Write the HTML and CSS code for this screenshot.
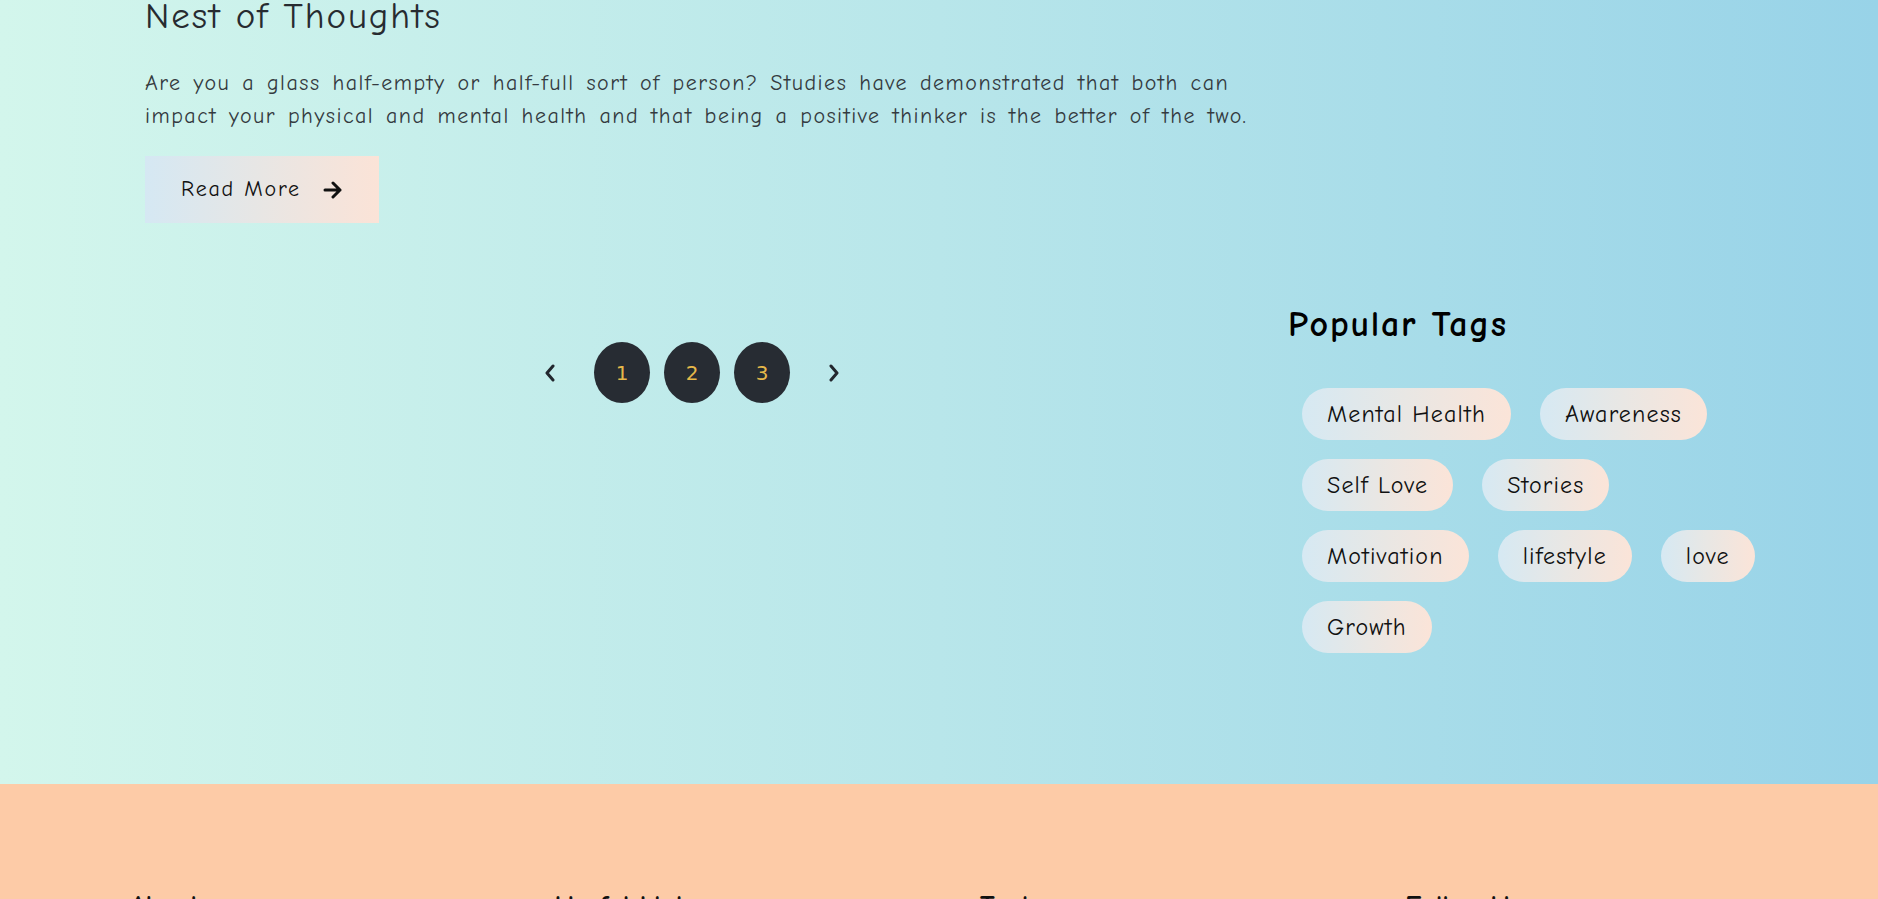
FILE: index.html
```html
<!DOCTYPE html>
<html lang="en">
<head>
<meta charset="utf-8">
<title>Nest of Thoughts</title>
<link rel="stylesheet" href="styles.css">
</head>
<body>
<main class="page">
  <div class="layout">
    <section class="posts">
      <article class="post">
        <h2 class="post-title">Nest of Thoughts</h2>
        <p class="post-text">Are you a glass half-empty or half-full sort of person? Studies have demonstrated that both can impact your physical and mental health and that being a positive thinker is the better of the two.</p>
        <a class="read-more" href="#">Read More
          <svg class="arrow" width="20" height="18" viewBox="0 0 20 18" aria-hidden="true"><path d="M2 9h15M10 2l7 7-7 7" fill="none" stroke="#111" stroke-width="3" stroke-linecap="round" stroke-linejoin="round"/></svg>
        </a>
      </article>
      <nav class="pager">
        <a class="pager-arrow" href="#"><svg width="12" height="18" viewBox="0 0 12 18"><path d="M9 2L3 9l6 7" fill="none" stroke="#22272e" stroke-width="3" stroke-linecap="round" stroke-linejoin="round"/></svg></a>
        <a class="pager-num" href="#">1</a>
        <a class="pager-num" href="#">2</a>
        <a class="pager-num" href="#">3</a>
        <a class="pager-arrow" href="#"><svg width="12" height="18" viewBox="0 0 12 18"><path d="M3 2l6 7-6 7" fill="none" stroke="#22272e" stroke-width="3" stroke-linecap="round" stroke-linejoin="round"/></svg></a>
      </nav>
    </section>
    <aside class="sidebar">
      <h3 class="side-title">Popular Tags</h3>
      <div class="tags">
        <a class="tag" href="#">Mental Health</a>
        <a class="tag" href="#">Awareness</a>
        <a class="tag" href="#">Self Love</a>
        <a class="tag" href="#">Stories</a>
        <a class="tag" href="#">Motivation</a>
        <a class="tag" href="#">lifestyle</a>
        <a class="tag" href="#">love</a>
        <a class="tag" href="#">Growth</a>
      </div>
    </aside>
  </div>
</main>
<footer class="footer">
  <div class="footer-cols">
    <h4 class="footer-title">About</h4>
    <h4 class="footer-title">Useful Links</h4>
    <h4 class="footer-title">Topics</h4>
    <h4 class="footer-title">Follow Us</h4>
  </div>
</footer>
</body>
</html>
```
FILE: styles.css
```css
html, body {
  margin: 0;
  padding: 0;
}
body {
  font-family: "Comic Sans MS", "Comic Neue", cursive;
  color: #212529;
  overflow: hidden;
}
a { text-decoration: none; color: inherit; }

.page {
  height: 784px;
  background: linear-gradient(90deg, #d3f6ec 0%, #b8e6ea 50%, #98d3e8 100%);
}
.layout {
  display: grid;
  grid-template-columns: 1094px 500px;
  column-gap: 49px;
  padding-left: 145px;
}

.post-title {
  margin: -6px 0 0;
  font-size: 37px;
  font-weight: 400;
  line-height: 1.2;
  letter-spacing: 1.9px;
  color: #272b30;
}
.post-text {
  margin: 29px -40px 0 0;
  font-size: 22px;
  line-height: 33px;
  letter-spacing: 1.5px;
  word-spacing: 3px;
  color: #343a40;
}
.read-more {
  display: inline-flex;
  align-items: center;
  gap: 22px;
  margin-top: 23px;
  padding: 20px 36px;
  font-size: 22px;
  line-height: 27px;
  letter-spacing: 1.8px;
  color: #111;
  background: linear-gradient(90deg, #d5e8f3 0%, #e8e6e4 50%, #fbe3d7 100%);
}
.arrow { display: block; }

.pager {
  display: flex;
  justify-content: center;
  align-items: center;
  gap: 14px;
  margin-top: 119px;
}
.pager-arrow {
  display: flex;
  align-items: center;
  padding: 0 24px;
}
.pager-num {
  display: flex;
  align-items: center;
  justify-content: center;
  width: 56px;
  height: 61px;
  border-radius: 50%;
  background: #272c33;
  color: #e6b94a;
  font-family: "DejaVu Sans", sans-serif;
  font-size: 20px;
}

.side-title {
  margin: 303px 0 0;
  font-size: 36px;
  font-weight: 700;
  line-height: 1.2;
  letter-spacing: 1.7px;
  color: #000;
}
.tags {
  display: flex;
  flex-wrap: wrap;
  column-gap: 29px;
  row-gap: 19px;
  margin-top: 42px;
  padding-left: 14px;
}
.tag {
  display: inline-block;
  padding: 0 25px;
  height: 52px;
  line-height: 52px;
  border-radius: 26px;
  font-size: 24px;
  letter-spacing: 1.15px;
  color: #111;
  background: linear-gradient(90deg, #d6e9f3 0%, #e9e7e4 50%, #fbe4d8 100%);
}

.footer {
  background: #fdcba7;
  padding: 106px 0 40px 130px;
}
.footer-cols {
  display: grid;
  grid-template-columns: repeat(4, 425px);
}
.footer-title {
  margin: 0;
  font-size: 28px;
  font-weight: 700;
  line-height: 1.2;
  color: #111;
}
```
